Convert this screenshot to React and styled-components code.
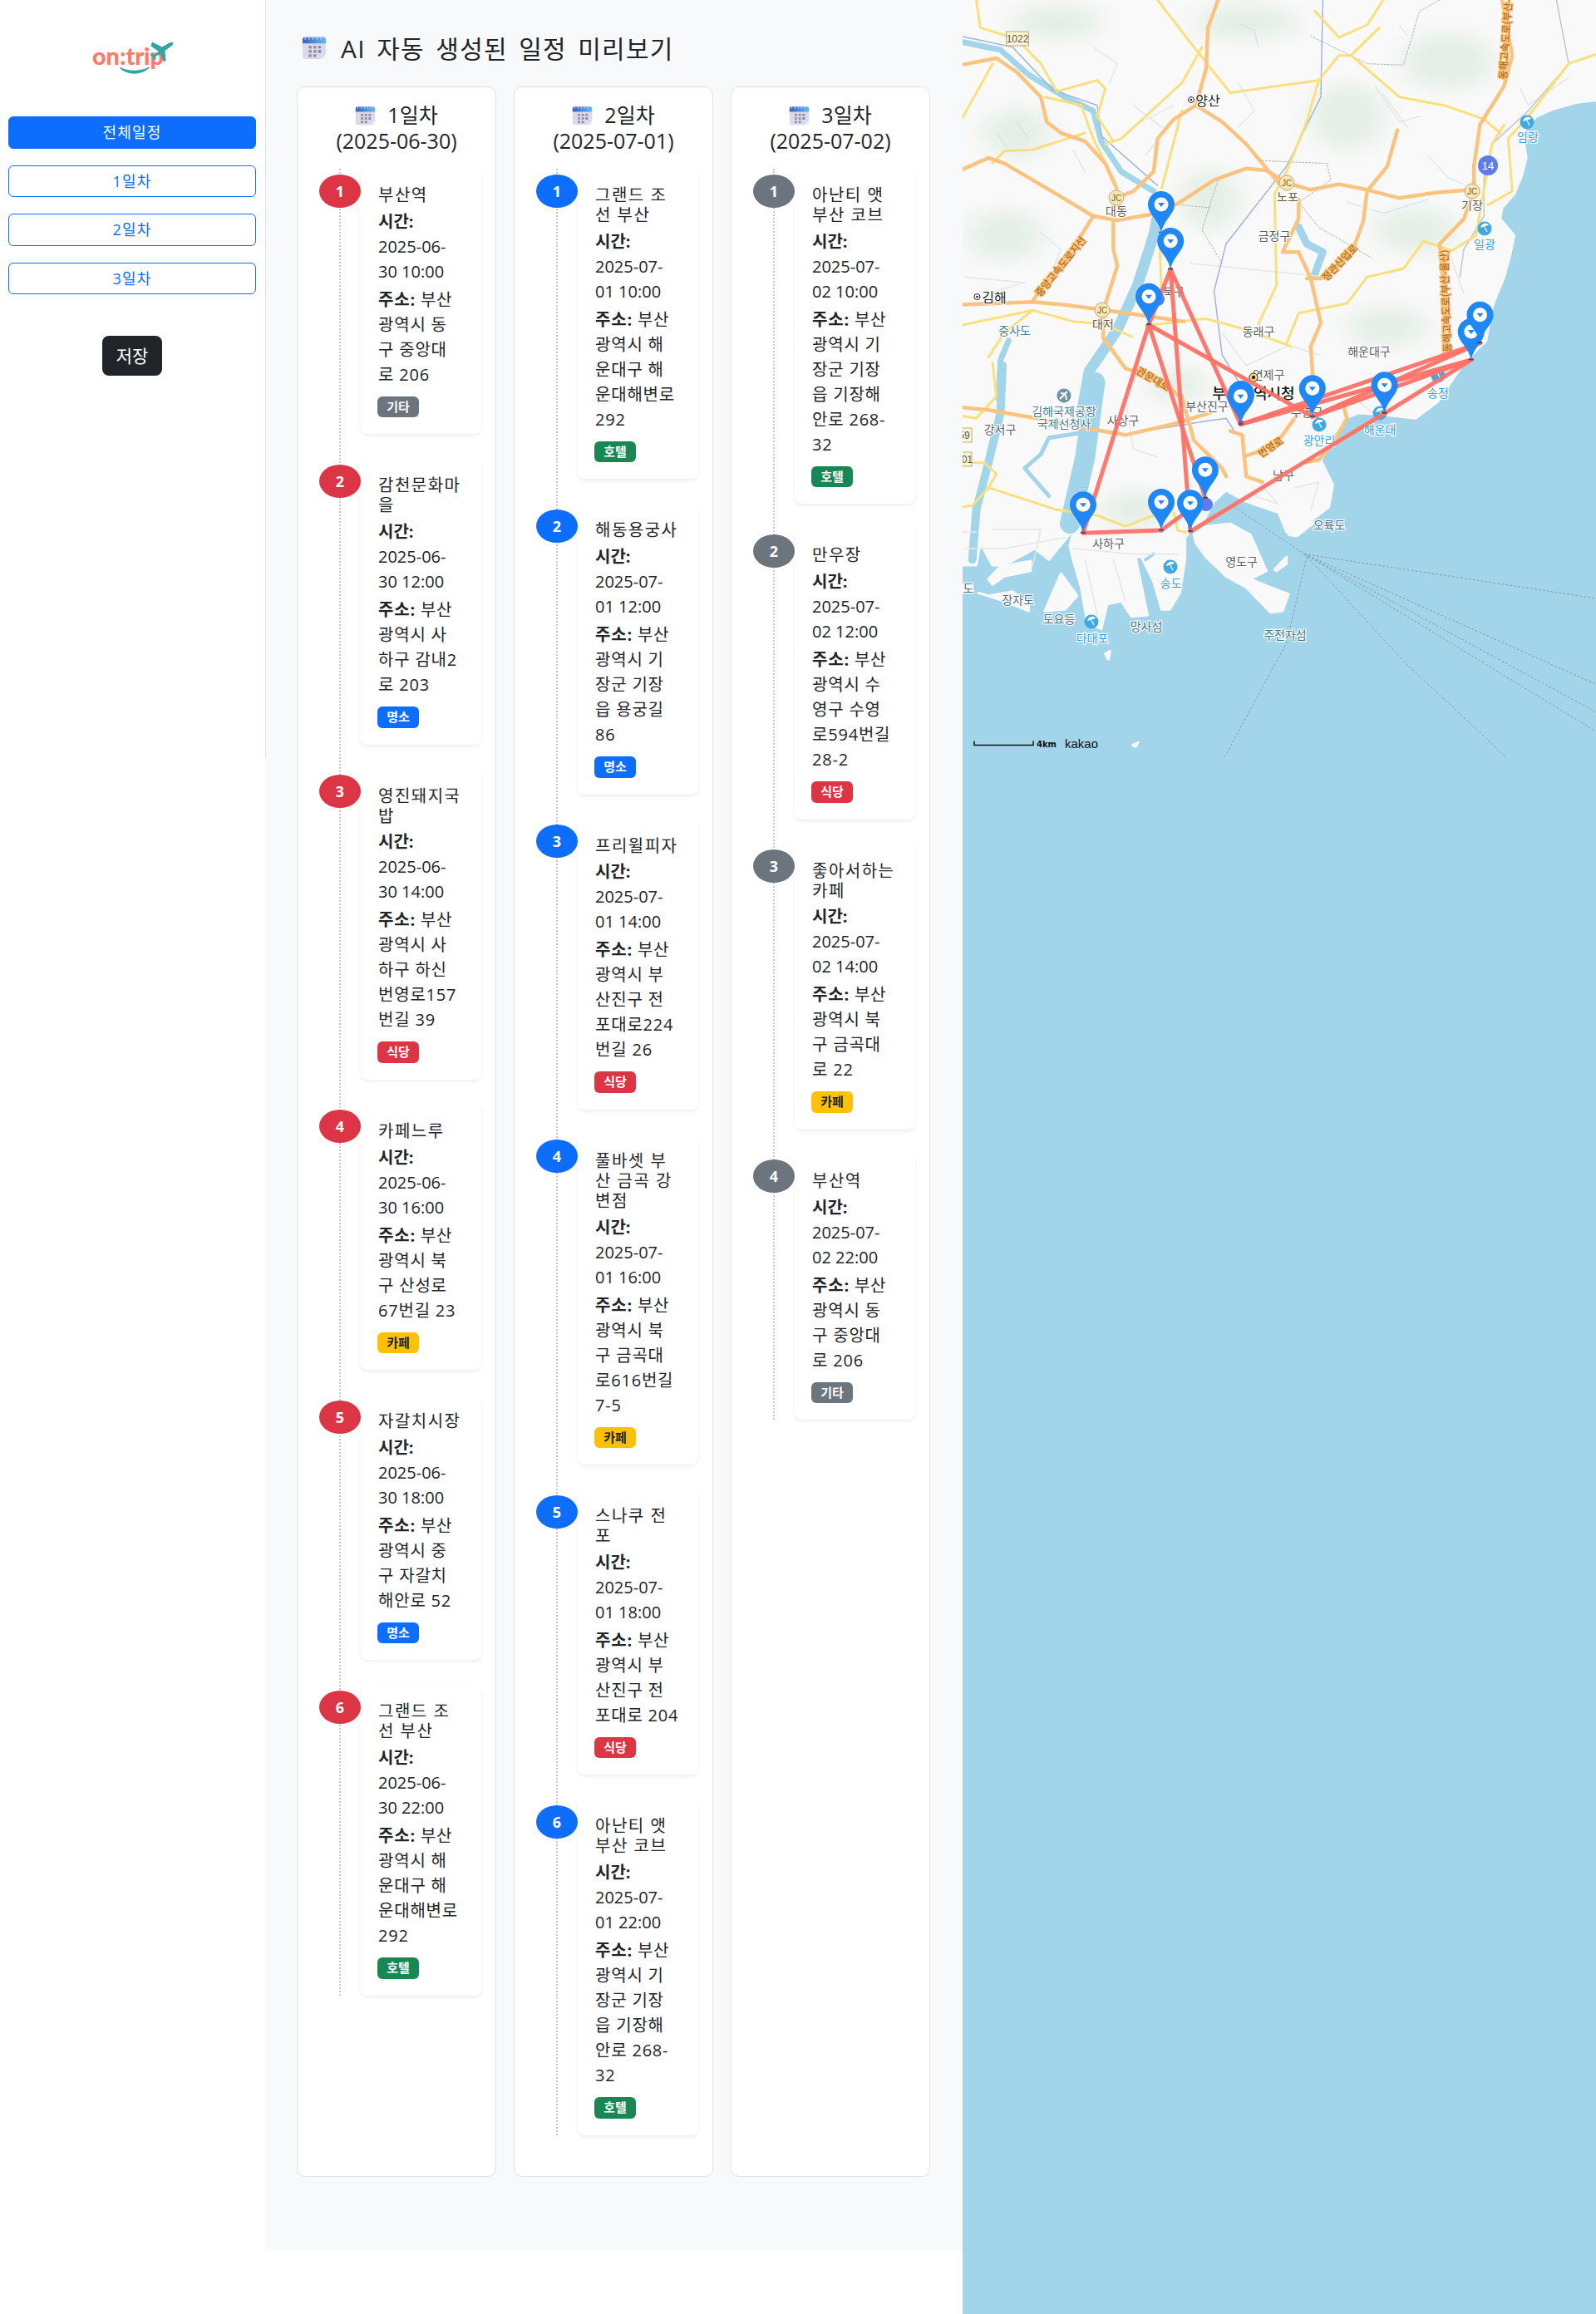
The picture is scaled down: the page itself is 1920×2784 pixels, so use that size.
import React from 'react';
import styled, { createGlobalStyle } from 'styled-components';

const GlobalStyle = createGlobalStyle`
  html, body {
    margin: 0;
    padding: 0;
    background: #fff;
    color: #212529;
    font-family: 'Open Sans', 'Noto Sans CJK KR', sans-serif;
  }
  * { box-sizing: border-box; }
`;

const Page = styled.div`
  display: flex;
  align-items: flex-start;
  width: 1920px;
  height: 2784px;
  overflow: hidden;
`;

const Sidebar = styled.aside`
  width: 320px;
  height: 912px;
  flex-shrink: 0;
  border-right: 1px solid #dee2e6;
  padding: 50px 11px 0 10px;
  display: flex;
  flex-direction: column;
`;

const LogoWrap = styled.div`
  height: 40px;
  margin-bottom: 50px;
  display: flex;
  justify-content: center;
`;

const DayButton = styled.button`
  height: 38.5px;
  margin-bottom: 20px;
  width: 100%;
  border-radius: 6px;
  border: 1px solid #0d6efd;
  background: ${p => (p.$active ? '#0d6efd' : '#fff')};
  color: ${p => (p.$active ? '#fff' : '#0d6efd')};
  font: inherit;
  font-size: 18px;
  letter-spacing: 1.2px;
  padding: 0 0 2px;
`;

const SaveButton = styled.button`
  align-self: center;
  width: 72px;
  height: 48px;
  margin-top: 30px;
  border: 0;
  border-radius: 8px;
  background: #212529;
  color: #fff;
  font: inherit;
  font-size: 21px;
  padding: 0 0 2px;
`;

const Main = styled.main`
  width: 838px;
  flex-shrink: 0;
  background: #f8f9fa;
  padding: 38px 0 88px 37px;
`;

const PageTitle = styled.h3`
  display: flex;
  align-items: center;
  gap: 17px;
  margin: 0 0 28px 6px;
  height: 38px;
  font-size: 30px;
  font-weight: 400;
  letter-spacing: 1.2px;
  word-spacing: 4.5px;
  white-space: nowrap;
`;

const Columns = styled.div`
  display: flex;
  gap: 21px;
  align-items: stretch;
`;

const DayCard = styled.section`
  width: 240px;
  background: #fff;
  border: 1px solid #dee2e6;
  border-radius: 10px;
  padding: 17.5px 17px 49px 26px;
`;

const DayTitle = styled.h4`
  margin: 0 0 18.5px -9px;
  text-align: center;
  font-size: 25px;
  line-height: 31px;
  font-weight: 400;
  white-space: nowrap;
`;

const DayLine = styled.div`
  display: flex;
  align-items: center;
  justify-content: center;
  gap: 14px;
`;

const Timeline = styled.ol`
  position: relative;
  list-style: none;
  margin: 0;
  padding: 0;
  display: flex;
  flex-direction: column;
  gap: 30px;

  &::before {
    content: '';
    position: absolute;
    top: 0;
    bottom: 0;
    left: 23.5px;
    border-left: 2px dotted #c8c8c8;
  }
`;

const Stop = styled.li`
  position: relative;
  display: flex;
  align-items: flex-start;
`;

const StopNumber = styled.div`
  width: 50px;
  height: 40px;
  flex-shrink: 0;
  margin-top: 6.5px;
  border-radius: 50%;
  background: ${p => p.$color};
  color: #fff;
  font-size: 18px;
  font-weight: 700;
  display: flex;
  align-items: center;
  justify-content: center;
`;

const StopCard = styled.div`
  width: 145px;
  background: #fff;
  border-radius: 8px;
  box-shadow: 0 2px 4px rgba(0, 0, 0, 0.075);
  padding: 20px 0 20px 21px;
  position: relative;
`;

const StopName = styled.h5`
  margin: 0 0 4.8px;
  font-size: 20px;
  line-height: 24px;
  font-weight: 400;
  letter-spacing: 1.5px;
  white-space: pre;
`;

const StopText = styled.p`
  margin: 0 0 4px;
  font-size: 20px;
  line-height: 30px;
  letter-spacing: ${p => p.$spread || 0}px;
  white-space: pre;

  strong {
    font-weight: 700;
  }
`;

const KindBadge = styled.span`
  display: block;
  width: 50px;
  height: 25.5px;
  margin: 11px 0 0 -1px;
  border-radius: 6px;
  background: ${p => p.$bg};
  color: ${p => p.$fg};
  font-size: 15px;
  font-weight: 700;
  line-height: 25px;
  text-align: center;
`;

const MapPanel = styled.div`
  width: 762px;
  height: 2784px;
  flex-shrink: 0;
  background: #a3d5ea;
`;

const MapSvg = styled.svg`
  display: block;
  width: 762px;
  height: 912px;
`;

const MapLabel = styled.text`
  font-family: 'Noto Sans CJK KR', sans-serif;
  font-size: ${p => p.$size || 14}px;
  font-weight: ${p => p.$weight || 400};
  fill: ${p => p.$color || '#5a6166'};
  stroke: ${p => p.$halo || 'rgba(255,255,255,0.9)'};
  stroke-width: 2.5px;
  paint-order: stroke;
  text-anchor: middle;
  dominant-baseline: central;
`;

const ZoneLine = styled.polyline`
  fill: none;
  stroke: ${p => p.$color};
  stroke-width: ${p => p.$width}px;
  stroke-linejoin: round;
  stroke-linecap: round;
  stroke-dasharray: ${p => p.$dash || 'none'};
  vector-effect: non-scaling-stroke;
`;

const Shore = styled.polygon`
  fill: #f9f9f9;
  stroke: #f9f9f9;
  stroke-width: 3px;
  stroke-linejoin: round;
  vector-effect: non-scaling-stroke;
`;

const BADGES = {
  기타: { bg: '#6c757d', fg: '#fff' },
  명소: { bg: '#0d6efd', fg: '#fff' },
  식당: { bg: '#dc3545', fg: '#fff' },
  카페: { bg: '#ffc107', fg: '#212529' },
  호텔: { bg: '#198754', fg: '#fff' },
};

const DAYS = [
  {
    label: '1일차',
    date: '2025-06-30',
    color: '#dc3545',
    stops: [
      { name: '부산역', time: '10:00', addr: '부산\n광역시 동\n구 중앙대\n로 206', kind: '기타' },
      { name: '감천문화마\n을', time: '12:00', addr: '부산\n광역시 사\n하구 감내2\n로 203', kind: '명소' },
      { name: '영진돼지국\n밥', time: '14:00', addr: '부산\n광역시 사\n하구 하신\n번영로157\n번길 39', kind: '식당' },
      { name: '카페느루', time: '16:00', addr: '부산\n광역시 북\n구 산성로\n67번길 23', kind: '카페' },
      { name: '자갈치시장', time: '18:00', addr: '부산\n광역시 중\n구 자갈치\n해안로 52', kind: '명소' },
      { name: '그랜드 조\n선 부산', time: '22:00', addr: '부산\n광역시 해\n운대구 해\n운대해변로\n292', kind: '호텔' },
    ],
  },
  {
    label: '2일차',
    date: '2025-07-01',
    color: '#0d6efd',
    stops: [
      { name: '그랜드 조\n선 부산', time: '10:00', addr: '부산\n광역시 해\n운대구 해\n운대해변로\n292', kind: '호텔' },
      { name: '해동용궁사', time: '12:00', addr: '부산\n광역시 기\n장군 기장\n읍 용궁길\n86', kind: '명소' },
      { name: '프리윌피자', time: '14:00', addr: '부산\n광역시 부\n산진구 전\n포대로224\n번길 26', kind: '식당' },
      { name: '풀바셋 부\n산 금곡 강\n변점', time: '16:00', addr: '부산\n광역시 북\n구 금곡대\n로616번길\n7-5', kind: '카페' },
      { name: '스나쿠 전\n포', time: '18:00', addr: '부산\n광역시 부\n산진구 전\n포대로 204', kind: '식당' },
      { name: '아난티 앳\n부산 코브', time: '22:00', addr: '부산\n광역시 기\n장군 기장\n읍 기장해\n안로 268-\n32', kind: '호텔' },
    ],
  },
  {
    label: '3일차',
    date: '2025-07-02',
    color: '#6c757d',
    stops: [
      { name: '아난티 앳\n부산 코브', time: '10:00', addr: '부산\n광역시 기\n장군 기장\n읍 기장해\n안로 268-\n32', kind: '호텔' },
      { name: '만우장', time: '12:00', addr: '부산\n광역시 수\n영구 수영\n로594번길\n28-2', kind: '식당' },
      { name: '좋아서하는\n카페', time: '14:00', addr: '부산\n광역시 북\n구 금곡대\n로 22', kind: '카페' },
      { name: '부산역', time: '22:00', addr: '부산\n광역시 동\n구 중앙대\n로 206', kind: '기타' },
    ],
  },
];

// the calendar emoji, drawn since there is no emoji font here
const CalendarIcon = ({ size }) => (
  <svg width={size} height={size} viewBox="0 0 32 32">
    <defs>
      <linearGradient id="calTop" x1="0" x2="1" y1="0" y2="0">
        <stop offset="0" stopColor="#3b62c4" />
        <stop offset="1" stopColor="#63b8f0" />
      </linearGradient>
    </defs>
    <rect x="1" y="3" width="30" height="28" rx="3.5" fill="#dcd9e8" />
    <path d="M1 6.5A3.5 3.5 0 0 1 4.5 3h23A3.5 3.5 0 0 1 31 6.5V11H1z" fill="url(#calTop)" />
    {[6, 11, 16, 21, 26].map(x => (
      <path key={x} d="M0 5V2.5A1.5 1.5 0 0 1 3 2.5" transform={`translate(${x - 1.5} 1)`} fill="none" stroke="#d8d8e6" strokeWidth="1.2" />
    ))}
    {[0, 1, 2].map(row =>
      [0, 1, 2].map(col => (
        <rect
          key={`${row}${col}`}
          x={9 + col * 6}
          y={14 + row * 5.5}
          width="3.6"
          height="3.4"
          fill={row === 1 && col === 2 ? '#3a8fe8' : row === 2 && col === 2 ? '#dcd9e8' : '#8e8ba0'}
        />
      ))
    )}
    <path d="M31 24l-7 7h3.5A3.5 3.5 0 0 0 31 27.5z" fill="#f1eff7" />
  </svg>
);

const Logo = () => (
  <svg width="120" height="42" viewBox="0 0 120 42">
    <text x="12" y="28" textLength="86" lengthAdjust="spacingAndGlyphs" fontFamily="Lato, sans-serif" fontWeight="900" fontSize="28" fill="#fb7b6a">
      on:trip
    </text>
    <path d="M46 32c9 8 24 8 34-0.5c-9 5-24 5.500-34 0.5z" fill="#2fa6a3" stroke="#2fa6a3" strokeWidth="1.500" strokeLinejoin="round" />
    <path
      d="M84 0.500l12 6 8-4.500c2-1 5-1.500 5.500-.5s-1 3-3 4.500l-7 5 1 12-2.500 1.500-4-10-6 3.500 .5 3.500-2 1-1.500-4-4-2.500 2-1 3 1 6-4-9.500-6.500z"
      fill="#2fa6a3"
    />
  </svg>
);

const low = s =>
  s
    .trim()
    .split(/\s+/)
    .map(p => {
      const [x, y] = p.split(',');
      return `${x},${+y + 1320}`;
    })
    .join(' ');

const LAND =
  '-10,-10 1580,-10 1580,360 1520,370 1460,395 1420,420 1385,480 1395,570 1385,630 1365,700 1335,750 1330,790 1365,850 1355,920 1340,1000 1320,1070 1310,1110 1295,1230 1240,1310 ' +
  low(
    '1175,130 1120,190 1060,180 980,170 945,190 920,260 885,340 915,430 905,510 860,560 830,610 800,600 780,530 700,490 650,450 620,490 590,570 560,600 548,620 548,700 535,820 510,880 490,880 470,780 440,690 425,690 455,900 415,905 390,850 355,860 340,950 305,925 290,800 270,700 262,650 272,590 210,700 175,660 100,720 70,720 40,640 30,720 -10,720'
  );

const ISLANDS = [
  '570,610 600,580 660,570 710,610 750,740 710,770 760,800 805,825 790,885 760,890 700,800 650,760 600,690 575,640',
  '35,820 100,850 160,885 160,860 120,815 60,830',
  '60,770 90,725 165,705 165,740 100,760 70,790',
  '200,885 240,750 280,830 250,880',
  '-10,790 20,790 20,815 -10,815',
  '770,735 800,690 800,715 775,740',
  '350,1040 362,1030 358,1060',
  '418,1370 432,1360 425,1375',
  '805,610 860,545 865,570 825,615',
];

const WATER_TOP = [
  { w: 7, pts: '-10,150 90,180 160,270 250,350 320,400 340,510 390,620 470,690' },
  { w: 13, pts: '490,710 470,850 430,1030 380,1190 310,1340 290,1500' },
  { w: 9, pts: '830,820 850,880 890,910 870,990' },
  { w: 7, pts: '110,1230 90,1300 85,1440' },
];

const WATER_LOW = [
  { w: 24, pts: '325,60 300,330 262,570' },
  { w: 10, pts: '95,0 90,170 60,350 30,520 20,700' },
  { w: 5, pts: '300,240 210,260 190,320 150,370 210,470' },
  { w: 4, pts: '450,700 470,680' },
];

const ORANGE_TOP = [
  '-10,235 80,210 130,260 190,350 205,440 240,480 300,510 350,590 378,680',
  '-10,615 60,570 100,590 170,650 240,710 320,780 380,795 460,775 530,735 620,650 700,608 750,615 800,660 860,685 930,665 1000,685 1080,715 1170,695 1260,685',
  '378,713 420,690 470,620 480,500 520,430 575,380 600,250 605,100 630,0',
  '575,380 640,440 700,520 780,660',
  '320,780 290,850 240,950 170,1085',
  '-10,1100 170,1090 250,1100 350,1120 450,1140 545,1160',
  '370,790 370,900 380,960 345,1120 345,1220 400,1330 490,1370 540,1440',
  '1075,470 1050,600 1000,690 990,800 960,920 885,1005 850,1005',
  '830,720 830,790 790,910 830,910 860,1005 885,1165 860,1250 865,1360',
  '1335,0 1360,200 1340,310 1280,450 1265,600 1265,690 1240,790 1180,880 1190,1050 1190,1290',
];

const ORANGE_LOW = [
  '-10,150 60,160 180,190 300,225 400,250 520,210 610,170',
  '540,110 570,270 640,370 650,400',
  '660,235 690,250 695,330 700,400 740,420',
  '700,325 770,290 830,170',
  '940,140 950,190 910,290 880,340 840,350',
];

const YELLOW_TOP = [
  '30,0 40,100 130,140 190,230 230,330 330,290 350,320 330,420 370,510',
  '480,0 570,170 660,335 780,310 880,290 930,200 960,200 1080,350 1190,380 1290,430 1330,480',
  '870,40 930,135 1000,90 1040,0',
  '960,200 1030,100',
  '880,290 850,440 800,620 770,700 775,1030 730,1170',
  '-10,1175 170,1120 270,1160 350,1170 415,1215',
  '450,1175 600,1150 700,1190 810,1250',
  '800,1240 830,1130 950,1095 1000,1000 1090,970 1140,870 1210,905 1270,850 1310,520 1340,450',
  '-10,440 70,230',
  '70,590 100,545 170,540 300,480',
  '200,350 290,380 320,500 375,660',
  '590,170 540,300 390,500 350,520',
  '1300,740 1360,690 1350,500 1400,420 1500,230 1580,190',
  '60,1290 100,1200 170,1120',
  '540,400 490,680',
  '485,880 490,1060',
];

const YELLOW_LOW = [
  '60,440 230,520 330,540 400,580 470,540',
  '-10,350 50,350 80,390 60,440 20,505 -10,510',
  '-10,180 30,190 80,110 70,-10',
  '520,530 530,595 550,600',
];

const STREETS_LOW = [
  '-10,600 30,600',
  '270,660 420,680 530,680',
  '0,660 100,660 250,620',
  '70,590 190,590 170,720',
  '300,700 330,900',
  '370,700 400,850',
  '440,0 400,120 420,300 480,330',
  '720,470 780,500 730,420',
  '820,440 880,420 860,520',
  '980,130 1030,190',
];

const STREETS_TOP = [
  '420,380 500,470 450,560',
  '440,440 520,380',
  '1020,310 1080,440 1130,420',
  '1040,340 1100,460',
  '750,1220 880,1280',
  '640,1200 700,1320 800,1250',
  '1200,900 1240,1060',
  '560,950 900,1000',
  '0,1000 150,1020 60,1060',
  '1380,320 1400,380 1500,280',
];

const STREAMS = [
  '320,170 380,230 360,300',
  '690,90 720,110 730,170',
  '80,480 110,540',
  '130,440 160,500',
  '680,460 720,400 680,300',
  '1150,560 1200,640 1240,665',
  '950,730 1040,770 1150,720',
  '270,540 300,620',
  '190,840 240,900 220,970',
  '1080,90 1100,130',
];

const BOUNDARIES = [
  '860,130 1000,230 1090,235 1130,40 1180,0',
  '630,650 590,830 640,950',
  '740,580 900,590 910,650 830,730 880,820 1010,930',
  '540,740 610,750',
];

const HILLS = [
  [230, 80, 110, 60],
  [700, 80, 130, 60],
  [130, 480, 80, 90],
  [610, 720, 70, 110],
  [950, 420, 90, 120],
  [1200, 220, 110, 100],
  [1120, 830, 100, 80],
  [1050, 1180, 100, 70],
  [100, 850, 90, 90],
  [530, 1390, 70, 60],
  [420, 1840, 80, 70],
];

const ROUTES = [
  [[1303, 641.3], [1382, 390.7]],
  [[1303, 641.3], [1397, 638]],
  [[1397, 638], [1449.9, 599.3]],
  [[1382, 390.7], [1449.9, 599.3]],
  [[1408.2, 324], [1382, 390.7]],
  [[1408.2, 324], [1432, 639.3]],
  [[1408.2, 324], [1492.5, 510.7]],
  [[1382, 390.7], [1578.8, 501.3]],
  [[1492.5, 510.7], [1769.8, 433]],
  [[1492.5, 510.7], [1780.5, 412.7]],
  [[1578.8, 501.3], [1780.5, 412.7]],
  [[1578.8, 501.3], [1769.8, 433]],
  [[1432, 639.3], [1665.6, 497.3]],
  [[1665.6, 497.3], [1769.8, 433]],
];

const MARKERS = [
  [1397, 280],
  [1408.2, 324],
  [1393, 360, 'dot'],
  [1382, 390.7],
  [1769.8, 433],
  [1780.5, 412.7],
  [1493, 508],
  [1492.5, 510.7],
  [1578.8, 501.3],
  [1665.6, 497.3],
  [1451, 607, 'dot'],
  [1449.9, 599.3],
  [1397, 638],
  [1432, 639.3],
  [1303, 641.3],
];

const LABELS = [
  { t: '양산', x: 1453, y: 120, size: 16, color: '#222' },
  { t: '김해', x: 1196, y: 357, size: 16, color: '#222' },
  { t: '대동', x: 1343, y: 253, color: '#6b5a45' },
  { t: '노포', x: 1549, y: 236, color: '#6b5a45' },
  { t: '금정구', x: 1533, y: 283 },
  { t: '기장', x: 1771, y: 246, color: '#6b5a45' },
  { t: '북구', x: 1412, y: 350 },
  { t: '대저', x: 1327, y: 389, color: '#6b5a45' },
  { t: '중사도', x: 1220.6, y: 397, color: '#4a8296' },
  { t: '동래구', x: 1514, y: 398 },
  { t: '해운대구', x: 1647, y: 422 },
  { t: '연제구', x: 1526, y: 450 },
  { t: '일광', x: 1786, y: 293, color: '#3d9fd8' },
  { t: '임랑', x: 1838, y: 164, color: '#3d9fd8' },
  { t: '송정', x: 1730, y: 472, color: '#3d9fd8' },
  { t: '부산광역시청', x: 1508, y: 472, size: 18, color: '#111', weight: 500 },
  { t: '부산진구', x: 1452, y: 488 },
  { t: '사상구', x: 1351, y: 505 },
  { t: '강서구', x: 1203, y: 516 },
  { t: '김해국제공항', x: 1280, y: 494, color: '#4a8296' },
  { t: '국제선청사', x: 1280, y: 509, color: '#4a8296' },
  { t: '수영구', x: 1572, y: 495 },
  { t: '광안리', x: 1587, y: 529, color: '#3d9fd8' },
  { t: '해운대', x: 1660, y: 516, color: '#3d9fd8' },
  { t: '남구', x: 1544, y: 571 },
  { t: '오륙도', x: 1599, y: 631, color: '#4a7486' },
  { t: '사하구', x: 1333.5, y: 653 },
  { t: '영도구', x: 1493.5, y: 675 },
  { t: '송도', x: 1408.7, y: 700.7, color: '#3d9fd8' },
  { t: '장자도', x: 1224.5, y: 720.7, color: '#4a7486' },
  { t: '도요등', x: 1274, y: 744, color: '#4a7486' },
  { t: '다대포', x: 1314, y: 766.7, color: '#3d9fd8' },
  { t: '망사섬', x: 1379, y: 753, color: '#4a7486' },
  { t: '주전자섬', x: 1546, y: 763, color: '#4a7486' },
  { t: '도', x: 1165, y: 706.7, color: '#4a7486' },
];

const ROAD_LABELS = [
  { t: '중앙고속도로지선', x: 1275, y: 320, a: -51, size: 12 },
  { t: '동해고속도로(부산-울산)', x: 1811, y: 34, a: -86, size: 12 },
  { t: '정관산업로', x: 1611, y: 315, a: -46, size: 12 },
  { t: '동해고속도로(부산-울산)', x: 1738, y: 362, a: -92, size: 12 },
  { t: '번영로', x: 1528, y: 537, a: -33, size: 12 },
  { t: '관문대로', x: 1388, y: 455, a: 30, size: 12 },
];

const BEACHES = [
  [1837, 147],
  [1786, 275],
  [1730, 452],
  [1587, 511],
  [1660, 497],
  [1408, 682],
  [1313, 748],
];

const JUNCTIONS = [
  [1343, 238],
  [1548, 220],
  [1771, 230],
  [1326, 373],
];

const Marker = ({ x, y }) => (
  <g transform={`translate(${x} ${y})`}>
    <path d="M0 0C-3-16-16-22-16-34A16 16 0 1 1 16-34C16-22 3-16 0 0Z" fill="#2087f7" />
    <rect x="-3" y="-1.500" width="6" height="2" fill="#1b2a5a" opacity="0.7" />
    <circle cy="-34" r="8.500" fill="#fff" />
    <path d="M-4-36H4L0-31Z" fill="#2087f7" />
  </g>
);

const Shield = ({ x, y, w, t }) => (
  <g>
    <rect x={x - w / 2} y={y - 8} width={w} height="17" fill="#fdf6cf" stroke="#b9a97c" strokeWidth="1" />
    <text x={x} y={y + 5} textAnchor="middle" fontFamily="Liberation Sans, sans-serif" fontSize="12" fill="#555">
      {t}
    </text>
  </g>
);

const BusanMap = () => (
  <MapSvg viewBox="1158 0 762 912">
    <defs>
      <filter id="hillBlur" x="-50%" y="-50%" width="200%" height="200%">
        <feGaussianBlur stdDeviation="34" />
      </filter>
    </defs>

    {/* everything in this group is in coordinates of the enlarged crops */}
    <g transform="translate(1160 0) scale(0.4847 0.33333)">
      <Shore points={LAND} />
      {ISLANDS.map(s => (
        <Shore key={s} points={low(s)} />
      ))}
      <g filter="url(#hillBlur)">
        {HILLS.map(([cx, cy, rx, ry]) => (
          <ellipse key={`${cx}${cy}`} cx={cx} cy={cy} rx={rx} ry={ry} fill="#e3eee5" />
        ))}
      </g>
      {WATER_TOP.map(r => (
        <ZoneLine key={r.pts} points={r.pts} $color="#a3d5ea" $width={r.w} />
      ))}
      {WATER_LOW.map(r => (
        <ZoneLine key={r.pts} points={low(r.pts)} $color="#a3d5ea" $width={r.w} />
      ))}
      {STREAMS.map(s => (
        <ZoneLine key={s} points={s} $color="#bfe3f2" $width={1} />
      ))}
      {BOUNDARIES.map(s => (
        <ZoneLine key={s} points={s} $color="#b5b5a8" $width={1} $dash="2 2" />
      ))}
      {STREETS_TOP.map(s => (
        <ZoneLine key={s} points={s} $color="#e6e6e6" $width={1.5} />
      ))}
      {STREETS_LOW.map(s => (
        <ZoneLine key={s} points={low(s)} $color="#e6e6e6" $width={1.5} />
      ))}
      <ZoneLine points={`-10,130 120,170 220,325 330,380 340,490 480,670`} $color="#9db4dc" $width={1.500} $dash="4 1" />
      <ZoneLine points={`890,0 885,350 800,600 650,880 620,1050 640,1280 690,1400`} $color="#9db4dc" $width={1.500} $dash="4 1" />
      <ZoneLine points={`1470,0 1500,230 1400,400 1310,520 1290,640 1290,780 1240,900 1230,1000`} $color="#c6c6c6" $width={1.500} />
      <ZoneLine points={low('670,235 650,190 600,200 450,235')} $color="#9db4dc" $width={1.500} $dash="4 1" />
      {YELLOW_TOP.map(s => (
        <ZoneLine key={s} points={s} $color="#f9e07c" $width={3} />
      ))}
      {YELLOW_LOW.map(s => (
        <ZoneLine key={s} points={low(s)} $color="#f9e07c" $width={3} />
      ))}
      {ORANGE_TOP.map(s => (
        <ZoneLine key={s} points={s} $color="#fcc37e" $width={4.500} />
      ))}
      {ORANGE_LOW.map(s => (
        <ZoneLine key={s} points={low(s)} $color="#fcc37e" $width={4.500} />
      ))}
      {[
        '845,680 1568,840',
        '845,680 1568,1150',
        '845,680 1568,1250',
        '845,680 1568,1320',
        '845,680 1100,1080 1343,1410',
        '850,690 800,1000 647,1410',
        '845,680 670,510',
      ].map(s => (
        <ZoneLine key={s} points={low(s)} $color="#8b98a8" $width={1} $dash="2 3" />
      ))}
    </g>

    {ROAD_LABELS.map(l => (
      <MapLabel
        key={`${l.t}${l.y}`}
        x={l.x}
        y={l.y}
        transform={`rotate(${l.a} ${l.x} ${l.y})`}
        $size={l.size}
        $color="#b06f1c"
        $weight={500}
        $halo="#fcc37e"
      >
        {l.t}
      </MapLabel>
    ))}

    {LABELS.map(l => (
      <MapLabel key={l.t} x={l.x} y={l.y} $size={l.size} $color={l.color} $weight={l.weight}>
        {l.t}
      </MapLabel>
    ))}

    <Shield x={1224} y={46} w={27} t="1022" />
    <Shield x={1160} y={523} w={18} t="59" />
    <Shield x={1160} y={552} w={18} t="001" />

    {JUNCTIONS.map(([x, y]) => (
      <g key={x}>
        <circle cx={x} cy={y} r="9" fill="#fbe7ae" stroke="#b8a77c" />
        <text x={x} y={y + 3.5} textAnchor="middle" fontFamily="Liberation Sans, sans-serif" fontSize="10" fill="#6d5f40">
          JC
        </text>
      </g>
    ))}

    <circle cx="1790" cy="199" r="12" fill="#5f7de8" />
    <text x="1790" y="204" textAnchor="middle" fontFamily="Liberation Sans, sans-serif" fontSize="13" fill="#fff">
      14
    </text>

    {BEACHES.map(([x, y]) => (
      <g key={x}>
        <circle cx={x} cy={y} r="8.500" fill="#3fa9e6" />
        <path d={`M${x - 4} ${y - 2}a5 5 0 0 1 8 -2.500zM${x} ${y - 2}l3 6`} fill="#fff" stroke="#fff" strokeWidth="1.200" />
      </g>
    ))}

    <circle cx="1280" cy="476" r="8.500" fill="#6d94a6" />
    <path d="M1275 480l9-9M1276 473l6 1M1282 475l1 6" stroke="#fff" strokeWidth="2" fill="none" />

    <g fill="none" stroke="#222">
      <circle cx="1433" cy="120" r="3.500" />
      <circle cx="1175.500" cy="357" r="3.500" />
    </g>
    <circle cx="1433" cy="120" r="1.300" fill="#222" />
    <circle cx="1175.500" cy="357" r="1.300" fill="#222" />
    <circle cx="1508" cy="454" r="5" fill="#f9e07c" stroke="#222" />
    <circle cx="1508" cy="454" r="2.200" fill="#222" />

    <g stroke="#ff7166" strokeOpacity="0.95" strokeWidth="5" strokeLinecap="round">
      {ROUTES.map(([a, b]) => (
        <line key={`${a[0]}${b[0]}${a[1]}`} x1={a[0]} y1={a[1]} x2={b[0]} y2={b[1]} />
      ))}
    </g>

    {MARKERS.map(([x, y, dot]) =>
      dot ? (
        <circle key={x} cx={x} cy={y} r="8" fill="#5f7de8" />
      ) : (
        <Marker key={`${x}${y}`} x={x} y={y} />
      )
    )}

    <path d="M1172 891.500V896.500H1243V891.500" fill="none" stroke="#111" strokeWidth="1.500" />
    <text x="1247" y="899" fontFamily="DejaVu Sans, sans-serif" fontWeight="700" fontSize="10" fill="#111">
      4km
    </text>
    <text x="1281" y="900" fontFamily="Liberation Sans, sans-serif" fontSize="15" fill="#111">
      kakao
    </text>
  </MapSvg>
);

const StopItem = ({ stop, index, date, color }) => {
  const badge = BADGES[stop.kind];
  return (
    <Stop>
      <StopNumber $color={color}>{index + 1}</StopNumber>
      <StopCard>
        <StopName>{stop.name}</StopName>
        <StopText>
          <strong>시간:</strong>
          {`\n${date.slice(0, 8)}\n${date.slice(8)} ${stop.time}`}
        </StopText>
        <StopText $spread={0.8}>
          <strong>주소:</strong> {stop.addr}
        </StopText>
        <KindBadge $bg={badge.bg} $fg={badge.fg}>
          {stop.kind}
        </KindBadge>
      </StopCard>
    </Stop>
  );
};

export default function App() {
  return (
    <Page>
      <GlobalStyle />
      <Sidebar>
        <LogoWrap>
          <Logo />
        </LogoWrap>
        <DayButton $active>전체일정</DayButton>
        {DAYS.map(day => (
          <DayButton key={day.label}>{day.label}</DayButton>
        ))}
        <SaveButton>저장</SaveButton>
      </Sidebar>

      <Main>
        <PageTitle>
          <CalendarIcon size={30} />
          AI 자동 생성된 일정 미리보기
        </PageTitle>
        <Columns>
          {DAYS.map(day => (
            <DayCard key={day.label}>
              <DayTitle>
                <DayLine>
                  <CalendarIcon size={25} />
                  {day.label}
                </DayLine>
                ({day.date})
              </DayTitle>
              <Timeline>
                {day.stops.map((stop, i) => (
                  <StopItem key={stop.name} stop={stop} index={i} date={day.date} color={day.color} />
                ))}
              </Timeline>
            </DayCard>
          ))}
        </Columns>
      </Main>

      <MapPanel>
        <BusanMap />
      </MapPanel>
    </Page>
  );
}
